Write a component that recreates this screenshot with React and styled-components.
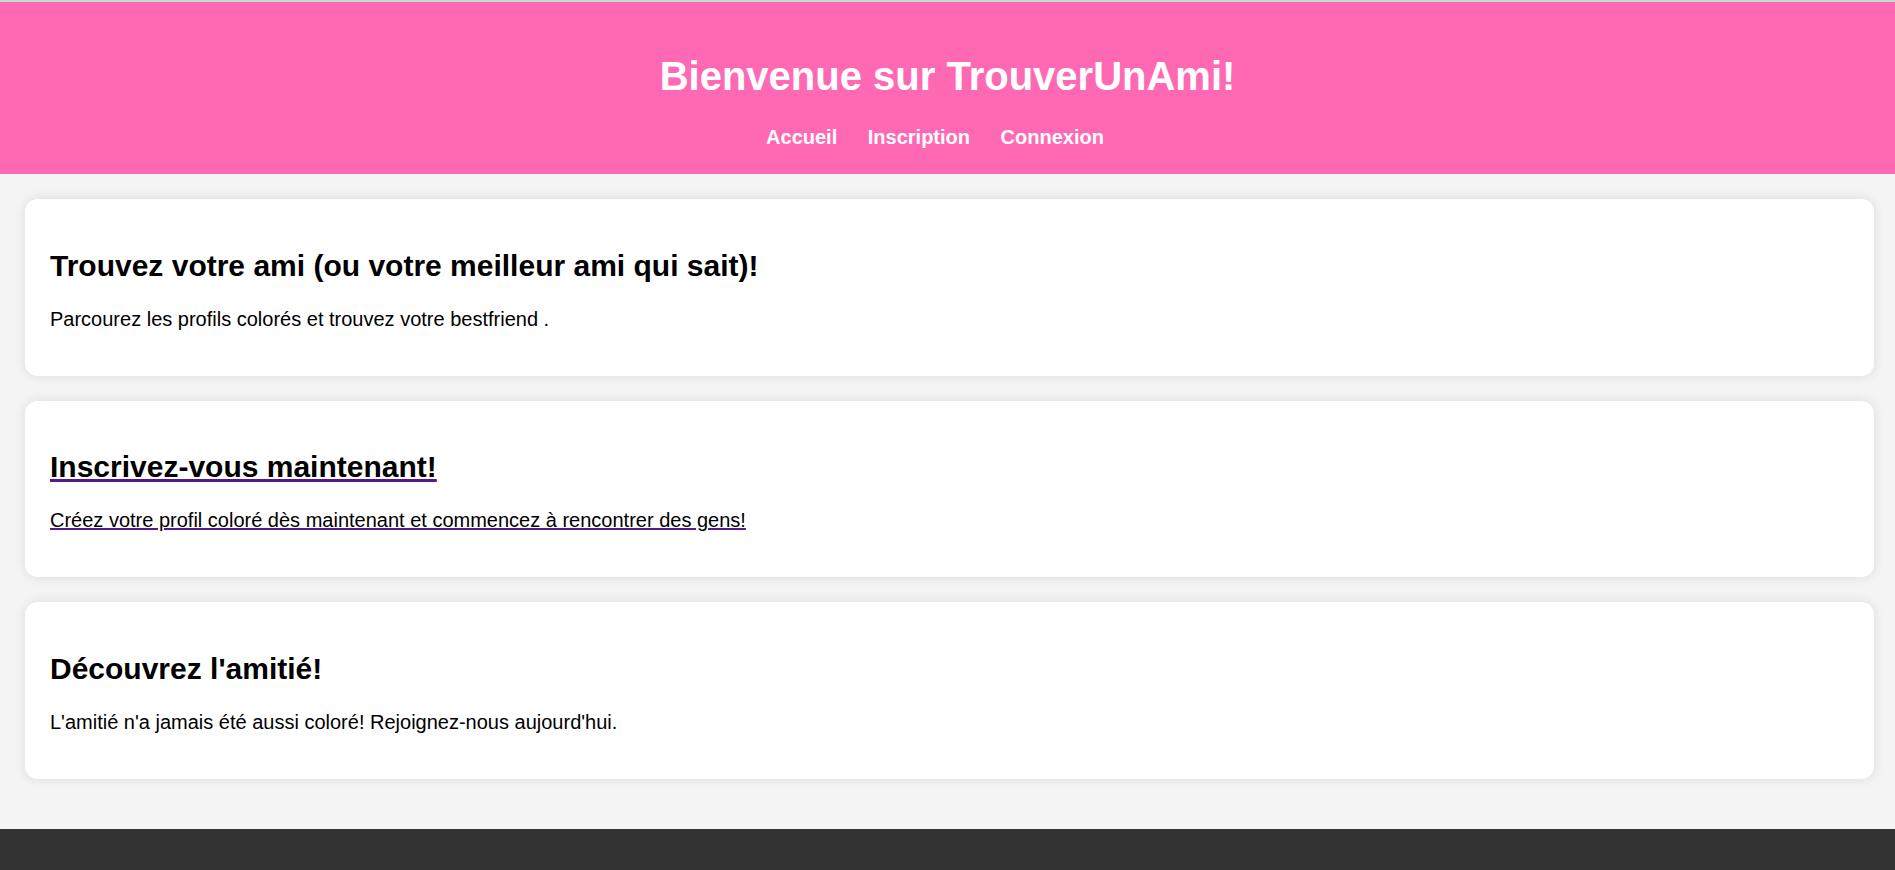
import React from 'react'
import styled, { createGlobalStyle } from 'styled-components'

const GlobalStyle = createGlobalStyle`
    html, body {
        margin: 0;
        padding: 0;
    }
    body {
        font-family: "Liberation Sans", Arial, sans-serif;
        font-size: 20px;
        background: #f4f4f4;
        color: #000;
        border-top: 2px solid #bfdfca;
    }
`

const Header = styled.header`
    background: #ff69b4;
    color: #fff;
    text-align: center;
    padding: 25px;

    h1 {
        font-size: 40px;
        font-weight: bold;
        margin: 27px 0;
        line-height: normal;
    }
`

const Nav = styled.nav`
    font-size: 20px;
    line-height: normal;
`

const NavLink = styled.a`
    color: #fff;
    font-weight: bold;
    text-decoration: none;
    margin-right: 25px;
`

const Main = styled.main`
    padding: 25px 21px 25px 25px;
`

const Card = styled.section`
    background: #fff;
    border-radius: 12.5px;
    padding: 25px;
    margin-bottom: 25px;
    box-shadow: 0 0 12px rgba(0, 0, 0, 0.1);

    h2 {
        font-size: 30px;
        font-weight: bold;
        margin: 24.8px 0;
        line-height: normal;
        color: #000;
    }

    p {
        font-size: 20px;
        margin: 20px 0;
        line-height: normal;
        color: #000;
    }
`

const CardLink = styled.a`
    display: block;
    color: #551a8b;
    text-decoration: underline;
`

const Footer = styled.footer`
    background: #333;
    min-height: 90px;
`

function App() {
    return (
        <>
            <GlobalStyle />
            <Header>
                <h1>Bienvenue sur TrouverUnAmi!</h1>
                <Nav>
                    <NavLink href="#">Accueil</NavLink>{' '}
                    <NavLink href="#">Inscription</NavLink>{' '}
                    <NavLink href="#">Connexion</NavLink>
                </Nav>
            </Header>
            <Main>
                <Card>
                    <h2>Trouvez votre ami (ou votre meilleur ami qui sait)!</h2>
                    <p>Parcourez les profils colorés et trouvez votre bestfriend .</p>
                </Card>
                <Card>
                    <CardLink href="#">
                        <h2>Inscrivez-vous maintenant!</h2>
                        <p>Créez votre profil coloré dès maintenant et commencez à rencontrer des gens!</p>
                    </CardLink>
                </Card>
                <Card>
                    <h2>Découvrez l'amitié!</h2>
                    <p>L'amitié n'a jamais été aussi coloré! Rejoignez-nous aujourd'hui.</p>
                </Card>
            </Main>
            <Footer />
        </>
    )
}

export default App
